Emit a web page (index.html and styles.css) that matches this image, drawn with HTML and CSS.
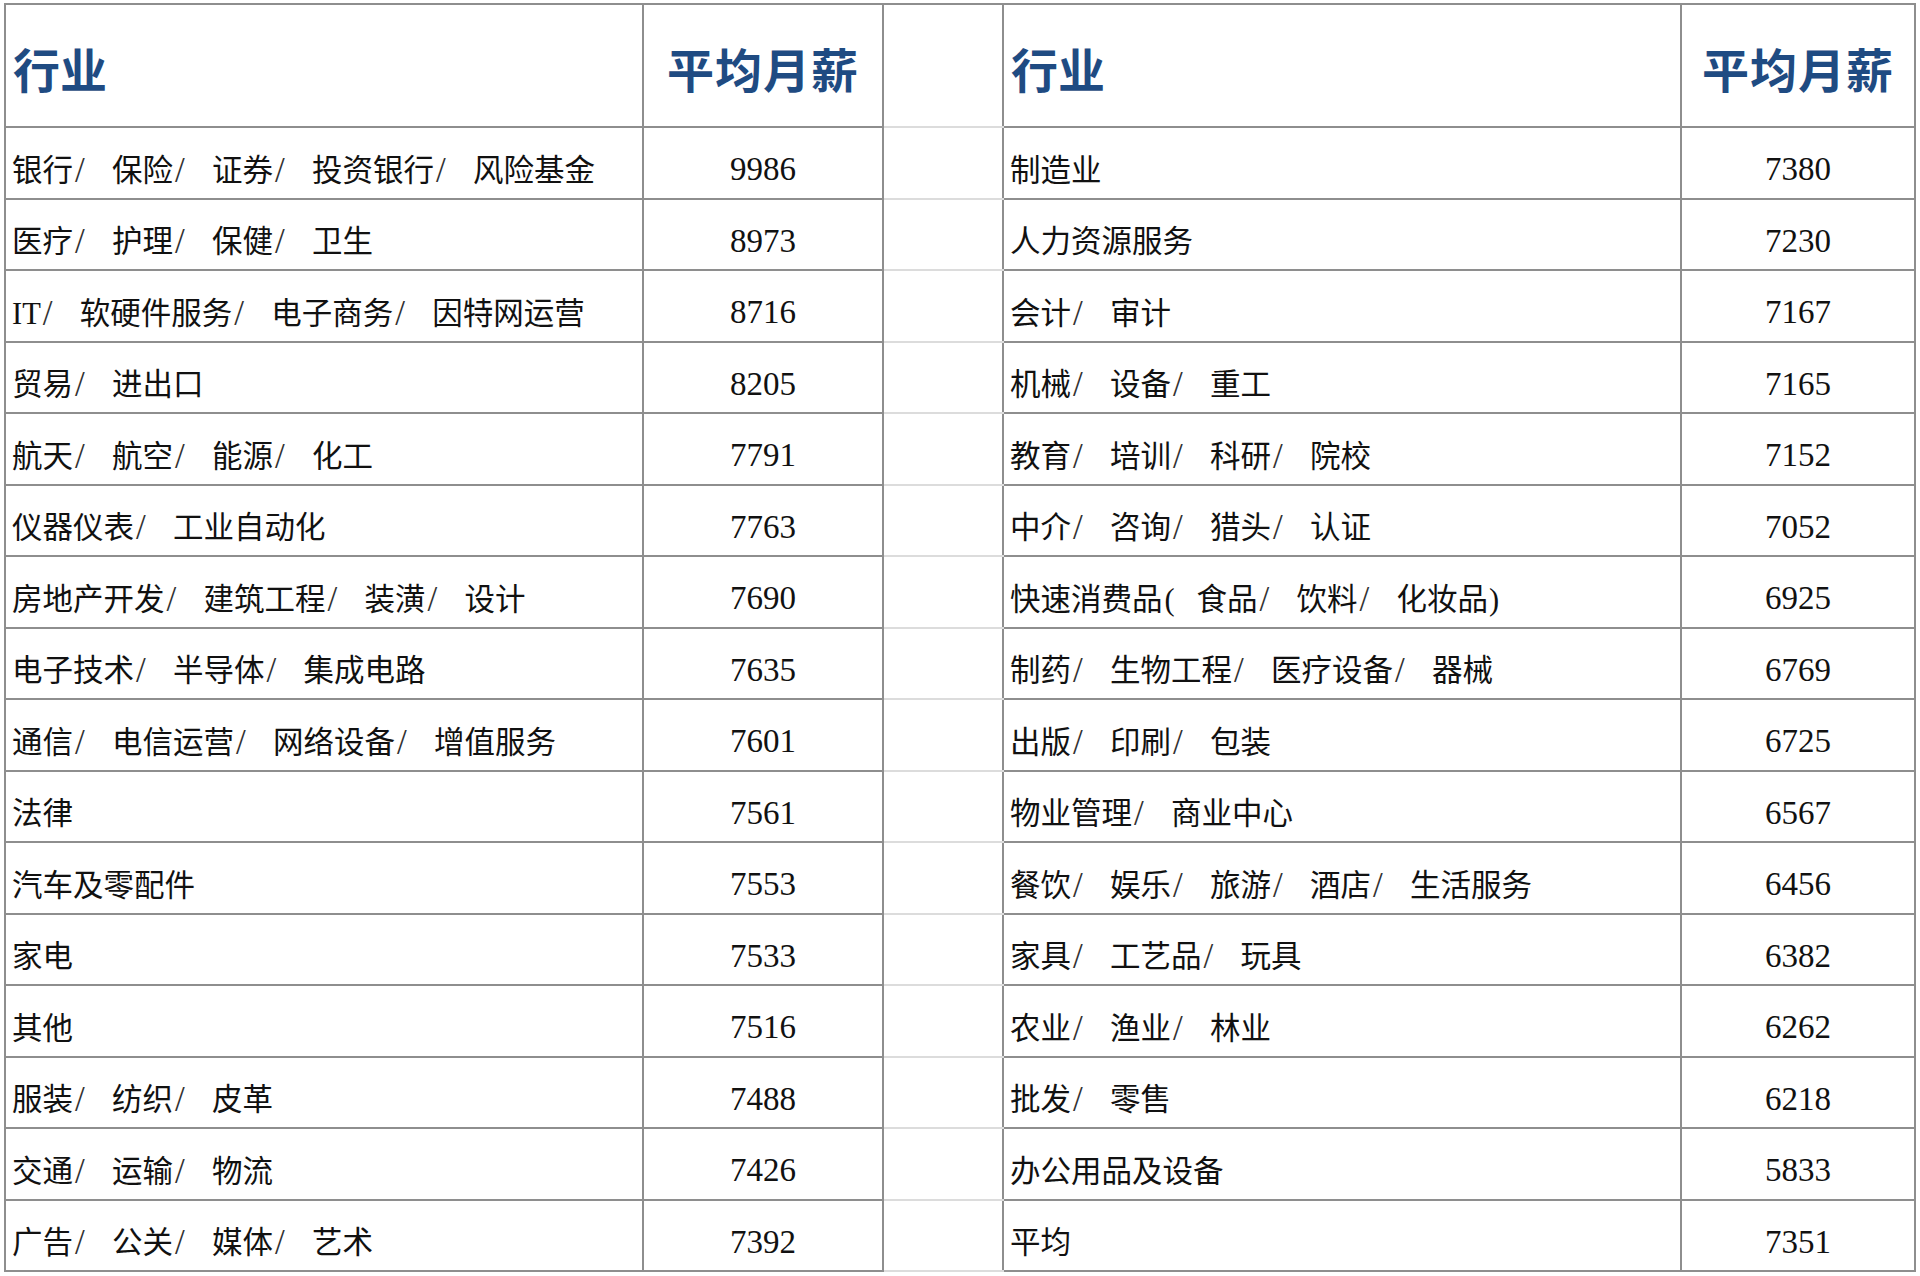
FILE: index.html
```html
<!DOCTYPE html>
<html lang="zh-CN">
<head>
<meta charset="utf-8">
<title>行业平均月薪</title>
<link rel="stylesheet" href="styles.css">
</head>
<body>
<table class="salary">
  <colgroup>
    <col class="c-name-l">
    <col class="c-num-l">
    <col class="c-gap">
    <col class="c-name-r">
    <col class="c-num-r">
  </colgroup>
  <thead>
    <tr class="head">
      <th class="name">行业</th>
      <th class="num">平均月薪</th>
      <th class="gap"></th>
      <th class="name">行业</th>
      <th class="num">平均月薪</th>
    </tr>
  </thead>
  <tbody>
    <tr><td class="name">银行<span class="sep">/ </span>保险<span class="sep">/ </span>证券<span class="sep">/ </span>投资银行<span class="sep">/ </span>风险基金</td><td class="num">9986</td><td class="gap"></td><td class="name">制造业</td><td class="num">7380</td></tr>
    <tr><td class="name">医疗<span class="sep">/ </span>护理<span class="sep">/ </span>保健<span class="sep">/ </span>卫生</td><td class="num">8973</td><td class="gap"></td><td class="name">人力资源服务</td><td class="num">7230</td></tr>
    <tr><td class="name">IT<span class="sep">/ </span>软硬件服务<span class="sep">/ </span>电子商务<span class="sep">/ </span>因特网运营</td><td class="num">8716</td><td class="gap"></td><td class="name">会计<span class="sep">/ </span>审计</td><td class="num">7167</td></tr>
    <tr><td class="name">贸易<span class="sep">/ </span>进出口</td><td class="num">8205</td><td class="gap"></td><td class="name">机械<span class="sep">/ </span>设备<span class="sep">/ </span>重工</td><td class="num">7165</td></tr>
    <tr><td class="name">航天<span class="sep">/ </span>航空<span class="sep">/ </span>能源<span class="sep">/ </span>化工</td><td class="num">7791</td><td class="gap"></td><td class="name">教育<span class="sep">/ </span>培训<span class="sep">/ </span>科研<span class="sep">/ </span>院校</td><td class="num">7152</td></tr>
    <tr><td class="name">仪器仪表<span class="sep">/ </span>工业自动化</td><td class="num">7763</td><td class="gap"></td><td class="name">中介<span class="sep">/ </span>咨询<span class="sep">/ </span>猎头<span class="sep">/ </span>认证</td><td class="num">7052</td></tr>
    <tr><td class="name">房地产开发<span class="sep">/ </span>建筑工程<span class="sep">/ </span>装潢<span class="sep">/ </span>设计</td><td class="num">7690</td><td class="gap"></td><td class="name">快速消费品<span class="open">( </span>食品<span class="sep">/ </span>饮料<span class="sep">/ </span>化妆品<span class="close">)</span></td><td class="num">6925</td></tr>
    <tr><td class="name">电子技术<span class="sep">/ </span>半导体<span class="sep">/ </span>集成电路</td><td class="num">7635</td><td class="gap"></td><td class="name">制药<span class="sep">/ </span>生物工程<span class="sep">/ </span>医疗设备<span class="sep">/ </span>器械</td><td class="num">6769</td></tr>
    <tr><td class="name">通信<span class="sep">/ </span>电信运营<span class="sep">/ </span>网络设备<span class="sep">/ </span>增值服务</td><td class="num">7601</td><td class="gap"></td><td class="name">出版<span class="sep">/ </span>印刷<span class="sep">/ </span>包装</td><td class="num">6725</td></tr>
    <tr><td class="name">法律</td><td class="num">7561</td><td class="gap"></td><td class="name">物业管理<span class="sep">/ </span>商业中心</td><td class="num">6567</td></tr>
    <tr><td class="name">汽车及零配件</td><td class="num">7553</td><td class="gap"></td><td class="name">餐饮<span class="sep">/ </span>娱乐<span class="sep">/ </span>旅游<span class="sep">/ </span>酒店<span class="sep">/ </span>生活服务</td><td class="num">6456</td></tr>
    <tr><td class="name">家电</td><td class="num">7533</td><td class="gap"></td><td class="name">家具<span class="sep">/ </span>工艺品<span class="sep">/ </span>玩具</td><td class="num">6382</td></tr>
    <tr><td class="name">其他</td><td class="num">7516</td><td class="gap"></td><td class="name">农业<span class="sep">/ </span>渔业<span class="sep">/ </span>林业</td><td class="num">6262</td></tr>
    <tr><td class="name">服装<span class="sep">/ </span>纺织<span class="sep">/ </span>皮革</td><td class="num">7488</td><td class="gap"></td><td class="name">批发<span class="sep">/ </span>零售</td><td class="num">6218</td></tr>
    <tr><td class="name">交通<span class="sep">/ </span>运输<span class="sep">/ </span>物流</td><td class="num">7426</td><td class="gap"></td><td class="name">办公用品及设备</td><td class="num">5833</td></tr>
    <tr><td class="name">广告<span class="sep">/ </span>公关<span class="sep">/ </span>媒体<span class="sep">/ </span>艺术</td><td class="num">7392</td><td class="gap"></td><td class="name">平均</td><td class="num">7351</td></tr>
  </tbody>
</table>
</body>
</html>
```

FILE: styles.css
```css
html, body {
  margin: 0;
  padding: 0;
  background: #ffffff;
}

body {
  padding: 3px 0 0 4px;
}

.salary {
  border-collapse: collapse;
  table-layout: fixed;
  width: 1912px;
  font-family: "Liberation Serif", "Noto Sans CJK SC", serif;
  color: #111111;
}

.c-name-l { width: 638px; }
.c-num-l  { width: 240px; }
.c-gap    { width: 120px; }
.c-name-r { width: 678px; }
.c-num-r  { width: 234px; }

.salary th,
.salary td {
  border: 2px solid #8e8e8e;
  padding: 0;
  vertical-align: middle;
  white-space: nowrap;
  overflow: hidden;
}

.head {
  height: 123px;
}

.head th {
  padding-top: 4px;
  font-family: "Noto Sans CJK SC", sans-serif;
  font-weight: 700;
  font-size: 47px;
  color: #1f4b82;
  line-height: 1;
}

.head th.name {
  text-align: left;
  padding-left: 7px;
}

.head th.num {
  text-align: center;
  letter-spacing: 1px;
}

tbody tr {
  height: 71.5px;
}

tbody td {
  vertical-align: top;
  line-height: 1;
}

tbody td.name {
  text-align: left;
  padding-top: 16px;
  padding-left: 6px;
  font-size: 30.5px;
  font-family: "Liberation Serif", "Noto Sans CJK SC", serif;
}

tbody td.num {
  text-align: center;
  padding-top: 14px;
  font-size: 33px;
  font-family: "Liberation Serif", serif;
}

.salary .gap {
  border-left: none;
  border-right: none;
  border-bottom: 2px solid #dcdcdc;
  border-top: 2px solid #dcdcdc;
}

.head .gap {
  border-top: 2px solid #8e8e8e;
}

.sep {
  display: inline-block;
  width: 37px;
  padding-left: 2px;
  text-align: left;
  font-size: 35px;
  line-height: 20px;
  color: #333333;
  vertical-align: -1px;
}

.open {
  display: inline-block;
  width: 32px;
  padding-left: 2px;
  text-align: left;
}

.close {
  padding-left: 1px;
}
```
